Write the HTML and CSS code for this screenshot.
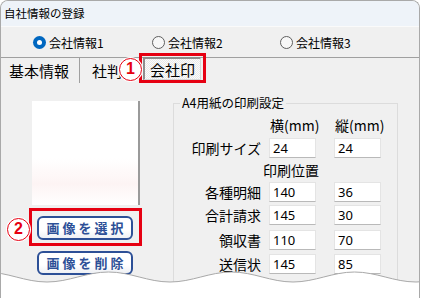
FILE: index.html
```html
<!DOCTYPE html>
<html lang="ja">
<head>
    <meta charset="UTF-8">
    <title>自社情報の登録</title>
    <link rel="stylesheet" href="styles.css">
</head>
<body>
    <div class="window">
        <div class="titlebar">自社情報の登録</div>

        <div class="radios">
            <label class="radio checked"><span class="dot"></span>会社情報1</label>
            <label class="radio wide"><span class="dot"></span>会社情報2</label>
            <label class="radio"><span class="dot"></span>会社情報3</label>
        </div>

        <div class="tabs">
            <span class="tab first">基本情報</span>
            <span class="tab">社判</span>
            <span class="tab active">会社印<span class="mark mark-1">1</span></span>
        </div>

        <div class="content">
            <div class="image-col">
                <div class="preview"></div>
                <div class="pick">
                    <button class="btn">画像を選択</button>
                    <span class="mark mark-2">2</span>
                </div>
                <button class="btn btn-delete">画像を削除</button>
            </div>

            <fieldset class="print">
                <legend>A4用紙の印刷設定</legend>
                <div class="grid">
                    <span></span>
                    <span class="head">横(mm)</span>
                    <span class="head">縦(mm)</span>

                    <span class="label">印刷サイズ</span>
                    <input class="num" value="24">
                    <input class="num" value="24">

                    <span class="label sub">印刷位置</span>
                    <span></span>

                    <span class="label">各種明細</span>
                    <input class="num" value="140">
                    <input class="num" value="36">

                    <span class="label">合計請求</span>
                    <input class="num" value="145">
                    <input class="num" value="30">

                    <span class="label">領収書</span>
                    <input class="num" value="110">
                    <input class="num" value="70">

                    <span class="label">送信状</span>
                    <input class="num" value="145">
                    <input class="num" value="85">
                </div>
            </fieldset>
        </div>

        <!-- torn paper edge -->
        <svg class="torn" width="421" height="298" viewBox="0 0 421 298">
            <path d="M-14.5,272 C7.6,272 24.9,282 47,282 C69.1,282 86.4,272 108.5,272 C130.6,272 147.9,282 170,282 C192.1,282 209.4,272 231.5,272 C253.6,272 270.9,282 293,282 C315.1,282 332.4,272 354.5,272 C376.6,272 393.9,282 416,282 C438.1,282 455.4,272 477.5,272 L477.5,310 L-14.5,310 Z" fill="#fff" stroke="#a8a8a8" stroke-width="1"/>
        </svg>
    </div>
</body>
</html>
```

FILE: styles.css
```css
body {
    margin: 0;
    width: 421px;
    height: 298px;
    overflow: hidden;
    background: #fff;
    font-family: "Noto Sans CJK JP", "Noto Sans", sans-serif;
    color: #000;
}
.window {
    position: relative;
    width: 420px;
    height: 298px;
    box-sizing: border-box;
    border: 1px solid #a9a9a9;
    border-bottom: none;
    border-radius: 8px 8px 0 0;
    background: #f0f0f0;
    overflow: hidden;
}
.titlebar {
    height: 25px;
    line-height: 25px;
    padding-left: 3px;
    font-size: 11.5px;
    background: #eef3f9;
    border-bottom: 1px solid #fafafa;
}
.radios {
    display: flex;
    align-items: center;
    height: 30px;
    padding-left: 32px;
    border-bottom: 1px solid #a0a0a0;
    font-size: 12px;
}
.radio {
    display: flex;
    align-items: center;
    width: 119px;
}
.radio.wide {
    width: 128px;
}
.dot {
    position: relative;
    width: 13px;
    height: 13px;
    margin-right: 3px;
    box-sizing: border-box;
    border: 1px solid #5f5f5f;
    border-radius: 50%;
    background: #f7f7f7;
}
.checked .dot {
    border: none;
    background: #0067c0;
}
.checked .dot::after {
    content: "";
    position: absolute;
    left: 4px;
    top: 4px;
    width: 5px;
    height: 5px;
    border-radius: 50%;
    background: #fff;
}
.tabs {
    display: flex;
    align-items: center;
    height: 25px;
    padding-left: 8px;
    font-size: 15px;
}
.tab {
    line-height: 25px;
}
.tab.first {
    padding-right: 10px;
    border-right: 1px solid #a0a0a0;
    margin-right: 12px;
}
.tab.active {
    position: relative;
    align-self: flex-start;
    margin-top: -1px;
    margin-left: 21px;
    width: 58px;
    height: 23px;
    line-height: 21px;
    box-sizing: border-box;
    text-align: center;
    border-top: 2px solid #8e8e8e;
    border-left: 2px solid #8e8e8e;
    border-right: 1px solid #d6d6d6;
    border-bottom: 1px solid #d6d6d6;
    background: repeating-conic-gradient(#fbfbfb 0 25%, #e9e9e9 0 50%) 0 0 / 2px 2px;
}
.tab.active::after {
    content: "";
    position: absolute;
    left: -6px;
    top: -6px;
    right: -6px;
    bottom: -4px;
    border: 3px solid #e60012;
}
.mark {
    position: absolute;
    width: 23px;
    height: 23px;
    box-sizing: border-box;
    border: 1.5px solid #e60012;
    border-radius: 50%;
    background: #fff;
    box-shadow: 0 0 0 1px #fff;
    color: #e60012;
    font-family: "Liberation Sans", sans-serif;
    font-weight: bold;
    font-size: 16px;
    line-height: 20px;
    text-align: center;
    z-index: 2;
}
.mark-1 {
    left: -26px;
    top: -1px;
}
.mark-2 {
    left: -25px;
    top: 7px;
}
.content {
    display: flex;
    align-items: flex-start;
}
.image-col {
    width: 172px;
    padding: 18px 0 0 31px;
    box-sizing: border-box;
}
.preview {
    width: 108px;
    height: 104px;
    box-sizing: border-box;
    border-right: 2px solid #9a9a9a;
    background: linear-gradient(to bottom, #fff 55%, #fdf4f4 80%, #fff 100%);
}
.pick {
    position: relative;
    width: 113px;
    height: 38px;
    margin: 3px 0 0 -3px;
    padding: 5px 0 0 5px;
    box-sizing: border-box;
    border: 3px solid #e60012;
}
.btn {
    display: block;
    width: 96px;
    height: 24px;
    padding: 0 0 0 3px;
    border: 2px solid #2d5097;
    border-radius: 6px;
    background: linear-gradient(to bottom, #fff 60%, #eef0f4);
    color: #2d5097;
    font-family: "Noto Sans CJK JP", sans-serif;
    font-size: 13px;
    font-weight: bold;
    letter-spacing: 3px;
    line-height: 20px;
}
.btn-delete {
    margin: 5px 0 0 5px;
}
.print {
    width: 225px;
    min-height: 200px;
    margin: 12px 0 0 0;
    padding: 2px 0 0 0;
    box-sizing: border-box;
    border: 1px solid #dcdcdc;
}
.print legend {
    margin-left: 6px;
    padding: 0 2px;
    font-size: 12.5px;
    line-height: 16px;
}
.grid {
    display: grid;
    grid-template-columns: 95px 65px 46px;
    grid-template-rows: 23px 23px 22px 21px 25px 25px 24px;
    align-items: center;
    font-size: 14px;
    white-space: nowrap;
}
.head {
    padding-left: 1px;
}
.label {
    text-align: right;
    padding-right: 8px;
}
.label.sub {
    grid-column: 1 / 3;
    padding-right: 15px;
}
.num {
    width: 47px;
    height: 20px;
    box-sizing: border-box;
    padding: 0 3px;
    border: 1px solid #e4e4e4;
    border-bottom-color: #b9b9b9;
    background: #fff;
    font-family: "Noto Sans", sans-serif;
    font-size: 13px;
    color: #000;
}
.torn {
    position: absolute;
    left: -1px;
    top: -1px;
    pointer-events: none;
}
```
